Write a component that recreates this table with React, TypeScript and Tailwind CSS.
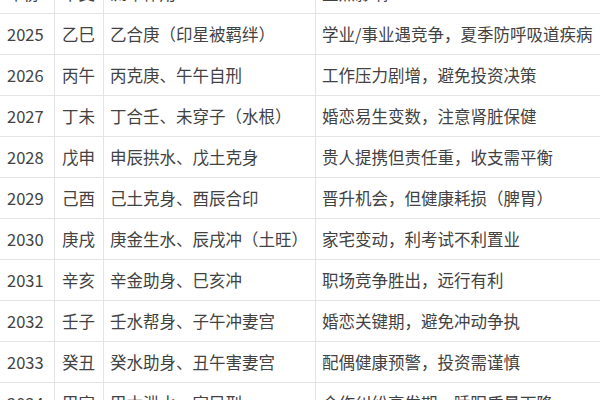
const rows = [
  { year: "年份", gz: "干支", rel: "流年作用", effect: "重点影响" },
  { year: "2025", gz: "乙巳", rel: "乙合庚（印星被羁绊）", effect: "学业/事业遇竞争，夏季防呼吸道疾病" },
  { year: "2026", gz: "丙午", rel: "丙克庚、午午自刑", effect: "工作压力剧增，避免投资决策" },
  { year: "2027", gz: "丁未", rel: "丁合壬、未穿子（水根）", effect: "婚恋易生变数，注意肾脏保健" },
  { year: "2028", gz: "戊申", rel: "申辰拱水、戊土克身", effect: "贵人提携但责任重，收支需平衡" },
  { year: "2029", gz: "己酉", rel: "己土克身、酉辰合印", effect: "晋升机会，但健康耗损（脾胃）" },
  { year: "2030", gz: "庚戌", rel: "庚金生水、辰戌冲（土旺）", effect: "家宅变动，利考试不利置业" },
  { year: "2031", gz: "辛亥", rel: "辛金助身、巳亥冲", effect: "职场竞争胜出，远行有利" },
  { year: "2032", gz: "壬子", rel: "壬水帮身、子午冲妻宫", effect: "婚恋关键期，避免冲动争执" },
  { year: "2033", gz: "癸丑", rel: "癸水助身、丑午害妻宫", effect: "配偶健康预警，投资需谨慎" },
  { year: "2034", gz: "甲寅", rel: "甲木泄水、寅巳刑", effect: "合作纠纷高发期，睡眠质量下降" },
];

const App = () => {
  return (
    <div className="w-[600px] h-[400px] overflow-hidden bg-white">
      <div
        className="-mt-[27px] text-[16.5px] text-[#424242]"
        style={{ fontFamily: '"Noto Sans CJK SC", "Noto Sans", sans-serif' }}
      >
        {rows.map((r) => (
          <div
            key={r.year}
            className="grid grid-cols-[55px_49px_212px_1fr] h-[41px] border-b border-[#e4e4e4]"
          >
            <div className="flex items-center pl-[7px] border-r border-[#e4e4e4]">{r.year}</div>
            <div className="flex items-center pl-[7px] border-r border-[#e4e4e4]">{r.gz}</div>
            <div className="flex items-center pl-[6px] border-r border-[#e4e4e4] whitespace-nowrap">{r.rel}</div>
            <div className="flex items-center pl-[6px] whitespace-nowrap">{r.effect}</div>
          </div>
        ))}
      </div>
    </div>
  );
};

export default App;
